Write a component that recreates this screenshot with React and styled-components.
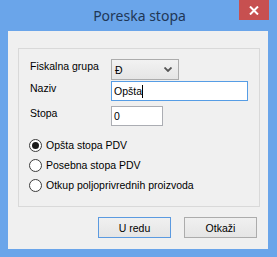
import React from "react";
import styled, { createGlobalStyle } from "styled-components";

const GlobalStyle = createGlobalStyle`
  html, body {
    margin: 0;
    padding: 0;
    background: #6aa5ea;
  }
  body {
    font-family: "Liberation Sans", Arial, sans-serif;
    font-size: 10.5px;
    color: #000;
  }
`;

const Window = styled.div`
  width: 277px;
  height: 257px;
  box-sizing: border-box;
  background: #6aa5ea;
  padding: 0 9px 8px 8px;
  display: flex;
  flex-direction: column;
  position: relative;
`;

const TitleBar = styled.div`
  height: 31px;
  display: flex;
  align-items: center;
  justify-content: center;
  padding-bottom: 1px;
  box-sizing: border-box;
`;

const Title = styled.span`
  font-family: "Noto Sans", "Open Sans", sans-serif;
  font-size: 14px;
  color: #1f3756;
  margin-left: 3px;
`;

const CloseButton = styled.div`
  position: absolute;
  top: 0;
  right: 8px;
  width: 30px;
  height: 20px;
  background: #c75050;
  display: flex;
  align-items: center;
  justify-content: center;
`;

const Client = styled.div`
  flex: 1;
  background: #f0f0f0;
  padding: 17px 9px 0 10px;
  display: flex;
  flex-direction: column;
`;

const GroupBox = styled.div`
  width: 242px;
  height: 159px;
  box-sizing: border-box;
  border: 1px solid #d9d9d9;
  padding: 10px 0 0 11px;
  display: flex;
  flex-direction: column;
`;

const FieldRow = styled.div`
  display: flex;
  align-items: flex-start;
  margin-top: ${(p) => p.$gap || 0}px;
`;

const Label = styled.span`
  width: 81px;
  line-height: 13px;
  padding-top: 1px;
  white-space: nowrap;
`;

const Combo = styled.div`
  width: 68px;
  height: 21px;
  box-sizing: border-box;
  border: 1px solid #acacac;
  background: linear-gradient(#f2f2f2, #e5e5e5);
  display: flex;
  align-items: center;
  justify-content: space-between;
  padding: 0 6px 0 3px;
`;

const TextBox = styled.div`
  width: ${(p) => p.$width}px;
  height: 20px;
  box-sizing: border-box;
  border: 1px solid ${(p) => (p.$focused ? "#569de5" : "#abadb3")};
  background: #fff;
  display: flex;
  align-items: center;
  padding-left: 2px;
`;

const Caret = styled.span`
  display: inline-block;
  width: 1px;
  height: 13px;
  background: #000;
`;

const RadioList = styled.div`
  display: flex;
  flex-direction: column;
  margin-top: 9px;
  margin-left: -1px;
`;

const RadioRow = styled.div`
  display: flex;
  align-items: center;
  height: 20px;
  gap: 4px;
`;

const RadioCircle = styled.span`
  width: 13px;
  height: 13px;
  box-sizing: border-box;
  border-radius: 50%;
  border: 1px solid #3c3c3c;
  background: #fff;
  display: flex;
  align-items: center;
  justify-content: center;
  &::after {
    content: "";
    width: 7px;
    height: 7px;
    border-radius: 50%;
    background: ${(p) => (p.$checked ? "#1a1a1a" : "transparent")};
  }
`;

const ButtonRow = styled.div`
  display: flex;
  justify-content: flex-end;
  gap: 13px;
  margin-top: 10px;
  padding-right: 2px;
`;

const Button = styled.div`
  width: 73px;
  height: 21px;
  box-sizing: border-box;
  border: 1px solid ${(p) => (p.$default ? "#5b9ae0" : "#acacac")};
  background: linear-gradient(#f0f0f0, #e5e5e5);
  display: flex;
  align-items: center;
  justify-content: center;
`;

const Chevron = () => (
  <svg width="8" height="5" viewBox="0 0 8 5">
    <path d="M0.5 0.5 L4 4 L7.5 0.5" fill="none" stroke="#555" strokeWidth="1.8" />
  </svg>
);

const CloseIcon = () => (
  <svg width="10" height="9" viewBox="0 0 10 9">
    <path d="M1 0.5 L9 8.5 M9 0.5 L1 8.5" stroke="#fff" strokeWidth="2" />
  </svg>
);

const options = [
  { label: "Opšta stopa PDV", checked: true },
  { label: "Posebna stopa PDV", checked: false },
  { label: "Otkup poljoprivrednih proizvoda", checked: false },
];

export default function App() {
  return (
    <>
      <GlobalStyle />
      <Window>
        <TitleBar>
          <Title>Poreska stopa</Title>
        </TitleBar>
        <CloseButton>
          <CloseIcon />
        </CloseButton>
        <Client>
          <GroupBox>
            <FieldRow>
              <Label>Fiskalna grupa</Label>
              <Combo>
                <span>Đ</span>
                <Chevron />
              </Combo>
            </FieldRow>
            <FieldRow $gap={1}>
              <Label>Naziv</Label>
              <TextBox $width={137} $focused>
                <span>Opšta</span>
                <Caret />
              </TextBox>
            </FieldRow>
            <FieldRow $gap={5}>
              <Label>Stopa</Label>
              <TextBox $width={52}>
                <span>0</span>
              </TextBox>
            </FieldRow>
            <RadioList>
              {options.map((o) => (
                <RadioRow key={o.label}>
                  <RadioCircle $checked={o.checked} />
                  <span>{o.label}</span>
                </RadioRow>
              ))}
            </RadioList>
          </GroupBox>
          <ButtonRow>
            <Button $default>U redu</Button>
            <Button>Otkaži</Button>
          </ButtonRow>
        </Client>
      </Window>
    </>
  );
}
